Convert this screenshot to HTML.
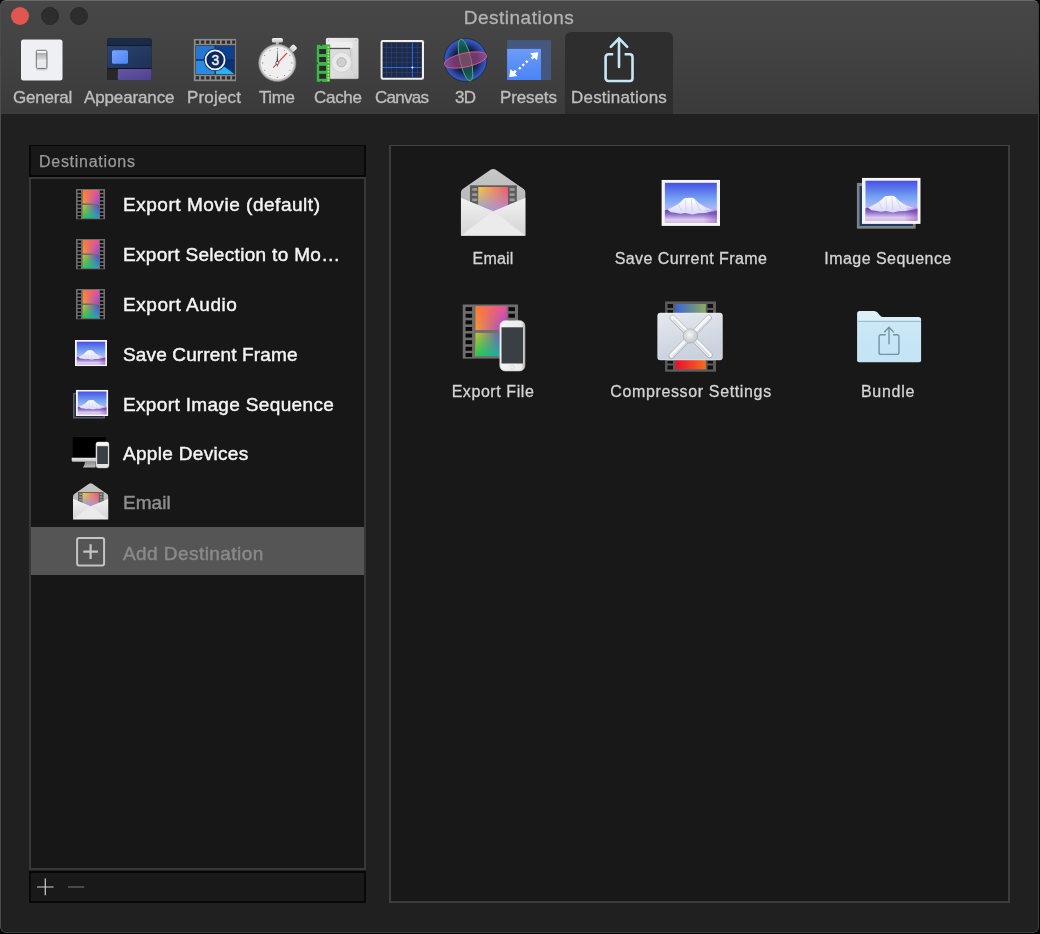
<!DOCTYPE html>
<html><head><meta charset="utf-8">
<style>
*{box-sizing:border-box;margin:0;padding:0}
html,body{width:1040px;height:934px;background:#000;overflow:hidden}
body{font-family:"Liberation Sans",sans-serif;position:relative}
.title,.lbl,.ht,.t,.gl{will-change:transform}
#win{position:absolute;left:0;top:0;width:1039px;height:933px;border-radius:6px;overflow:hidden;background:#202020}
#border{position:absolute;left:0;top:0;width:1039px;height:933px;border-radius:6px;border:1px solid #4c4c4c;border-top-color:#6a6a6a;border-right-color:#3c3c3c;border-bottom-color:#3c3c3c;pointer-events:none}
#tb{position:absolute;left:0;top:0;width:1040px;height:114px;background:linear-gradient(#474747 0%,#424242 50%,#3a3a3a 100%)}
#tbline{position:absolute;left:0;top:113px;width:1040px;height:1px;background:#3d3d3d}
.title{position:absolute;left:0;top:6.5px;width:1040px;text-align:center;color:#b2b2b2;font-size:19px;letter-spacing:0.45px;-webkit-text-stroke:0.3px currentColor}
.light{position:absolute;width:18px;height:18px;border-radius:50%;top:7px}
.lbl{position:absolute;top:87.5px;color:#bdbdbd;font-size:17px;white-space:nowrap;-webkit-text-stroke:0.35px currentColor}
#sel{position:absolute;left:565px;top:32px;width:108px;height:82px;background:#2e2e2e;border-radius:6px 6px 0 0}
svg{position:absolute;overflow:visible}
#hdr{position:absolute;left:29px;top:145px;width:337px;height:32px;background:#181818;border:2px solid #080808;border-top-width:1.5px}
.ht{position:absolute;left:39px;top:153.3px;color:#9a9a9a;font-size:16px;letter-spacing:0.72px;white-space:nowrap;-webkit-text-stroke:0.25px currentColor}
#list{position:absolute;left:29px;top:177px;width:337px;height:693px;background:#171717;border:2px solid #383838}
#selrow{position:absolute;left:31px;top:527px;width:333px;height:48px;background:#555555}
.t{position:absolute;left:123px;color:#f4f4f4;font-size:19px;letter-spacing:0.4px;white-space:nowrap;-webkit-text-stroke:0.45px currentColor}
#foot{position:absolute;left:29px;top:871px;width:337px;height:32px;background:#191919;border:2px solid #080808}
#right{position:absolute;left:389px;top:145px;width:621px;height:758px;background:#181818;border:2px solid #3c3c3c;border-top:1px solid #424242}
.gl{position:absolute;color:#d4d4d4;font-size:16px;letter-spacing:0.55px;white-space:nowrap;text-align:center;width:240px;-webkit-text-stroke:0.3px currentColor}
</style></head>
<body>
<div id="win">
  <svg style="left:0;top:0;width:0;height:0;position:absolute">
    <defs>
      <linearGradient id="ftT1" x1="0" y1="0" x2="1" y2="0"><stop offset="0" stop-color="#ff7a30"/><stop offset="1" stop-color="#e8529e"/></linearGradient>
      <linearGradient id="ftT2" x1="0" y1="0" x2="1" y2="0"><stop offset="0" stop-color="#f39a32"/><stop offset="1" stop-color="#9c40e4"/></linearGradient>
      <linearGradient id="ftB1" x1="0" y1="0" x2="1" y2="0"><stop offset="0" stop-color="#c0c828"/><stop offset="1" stop-color="#5246dc"/></linearGradient>
      <linearGradient id="ftB2" x1="0" y1="0" x2="1" y2="0"><stop offset="0" stop-color="#1ecc4c"/><stop offset="1" stop-color="#20a2c4"/></linearGradient>
      <linearGradient id="vmask" x1="0" y1="0" x2="0" y2="1"><stop offset="0" stop-color="#000"/><stop offset="1" stop-color="#fff"/></linearGradient>
      <mask id="vm" maskContentUnits="objectBoundingBox"><rect x="0" y="0" width="1" height="1" fill="url(#vmask)"/></mask>
      <linearGradient id="sky" x1="0" y1="0" x2="0" y2="1"><stop offset="0" stop-color="#4650e6"/><stop offset="0.4" stop-color="#74a0f2"/><stop offset="0.6" stop-color="#a2b4f6"/><stop offset="0.7" stop-color="#b8b0f0"/></linearGradient>
      <linearGradient id="base" x1="0" y1="0" x2="0" y2="1"><stop offset="0" stop-color="#5c40b4"/><stop offset="0.35" stop-color="#8a6cc8"/><stop offset="0.75" stop-color="#dccbec"/><stop offset="1" stop-color="#d4bce8"/></linearGradient>
      <linearGradient id="baseR" x1="0" y1="0" x2="1" y2="0"><stop offset="0.75" stop-color="#6a2aa0" stop-opacity="0"/><stop offset="1" stop-color="#7a30a8" stop-opacity="0.45"/></linearGradient>
      <linearGradient id="mtn" x1="0" y1="0" x2="0" y2="1"><stop offset="0" stop-color="#ffffff"/><stop offset="1" stop-color="#d8d8f8"/></linearGradient>
      <symbol id="photo" preserveAspectRatio="none" viewBox="0 0 59 46">
        <rect x="0" y="0" width="59" height="46" fill="#f6f6f6"/>
        <rect x="3.5" y="3" width="52.2" height="40" fill="url(#sky)"/>
        <path d="M4.5 30.2 Q16 26.5 22.5 19 Q23.5 18.2 25 18.2 L30.5 18 Q32 18 33.5 19.2 Q40 27.5 55.7 31.2 L55.7 35 L4.5 35Z" fill="url(#mtn)"/>
        <path d="M17 24 L20 31 M24 20 L25 31 M30 19 L31 32 M34 20 L39 31 M41 23 L47 31" stroke="#b8bcf0" stroke-width="0.9" opacity="0.55"/>
        <path d="M3.5 30.4 L6 29.6 L9.5 32.4 L14 32.8 L19 33.8 L24 33.2 L31 34.6 L37 33.4 L44 33.2 L50 32 L55.7 31.2 L55.7 43 L3.5 43Z" fill="url(#base)"/>
        <rect x="3.5" y="30" width="52.2" height="13" fill="url(#baseR)"/>
      </symbol>
      <symbol id="film" preserveAspectRatio="none" viewBox="0 0 29 30.5">
        <rect x="0" y="0" width="29" height="30.5" fill="#6e6e6e"/>
        <g fill="#0a0a0a">
          <rect x="1.6" y="1.6" width="3.4" height="2.2"/><rect x="1.6" y="5.3" width="3.4" height="2.2"/><rect x="1.6" y="9" width="3.4" height="2.2"/><rect x="1.6" y="12.7" width="3.4" height="2.2"/><rect x="1.6" y="16.4" width="3.4" height="2.2"/><rect x="1.6" y="20.1" width="3.4" height="2.2"/><rect x="1.6" y="23.8" width="3.4" height="2.2"/><rect x="1.6" y="27.3" width="3.4" height="2.2"/>
          <rect x="24" y="1.6" width="3.4" height="2.2"/><rect x="24" y="5.3" width="3.4" height="2.2"/><rect x="24" y="9" width="3.4" height="2.2"/><rect x="24" y="12.7" width="3.4" height="2.2"/><rect x="24" y="16.4" width="3.4" height="2.2"/><rect x="24" y="20.1" width="3.4" height="2.2"/><rect x="24" y="23.8" width="3.4" height="2.2"/><rect x="24" y="27.3" width="3.4" height="2.2"/>
        </g>
        <rect x="6.8" y="1" width="16.3" height="13.4" fill="url(#ftT1)"/>
        <rect x="6.8" y="1" width="16.3" height="13.4" fill="url(#ftT2)" mask="url(#vm)"/>
        <rect x="6.8" y="16" width="16.3" height="13" fill="url(#ftB1)"/>
        <rect x="6.8" y="16" width="16.3" height="13" fill="url(#ftB2)" mask="url(#vm)"/>
      </symbol>
      <linearGradient id="envL" x1="0" y1="0" x2="0" y2="1"><stop offset="0" stop-color="#f2f2f2"/><stop offset="1" stop-color="#d4d4d4"/></linearGradient>
      <linearGradient id="envBack" x1="0" y1="0" x2="0" y2="1"><stop offset="0" stop-color="#c8c8c8"/><stop offset="1" stop-color="#a8a8a8"/></linearGradient>
      <linearGradient id="emT1" x1="0" y1="0" x2="1" y2="0"><stop offset="0" stop-color="#f8ca48"/><stop offset="1" stop-color="#ee5868"/></linearGradient>
      <linearGradient id="emT2" x1="0" y1="0" x2="1" y2="0"><stop offset="0" stop-color="#8a9ae6"/><stop offset="0.5" stop-color="#a098dc"/><stop offset="1" stop-color="#b890d0"/></linearGradient>
      <symbol id="envelope" preserveAspectRatio="none" viewBox="0 0 65 67">
        <path d="M0 25 Q0 21.4 3 19.6 L29.5 1.5 Q32.5 -0.5 35.5 1.5 L62 19.6 Q65 21.4 65 25 V67 H0Z" fill="url(#envBack)"/>
        <rect x="9.2" y="16.7" width="47" height="40" fill="#5c5c5c"/>
        <g fill="#9c9c9c">
          <rect x="11.5" y="19.5" width="5" height="2.6"/><rect x="11.5" y="24.7" width="5" height="2.6"/><rect x="11.5" y="29.9" width="5" height="2.6"/><rect x="11.5" y="35.1" width="5" height="2.6"/>
          <rect x="49" y="19.5" width="5" height="2.6"/><rect x="49" y="24.7" width="5" height="2.6"/><rect x="49" y="29.9" width="5" height="2.6"/><rect x="49" y="35.1" width="5" height="2.6"/>
        </g>
        <rect x="17.5" y="18.4" width="29.9" height="26" fill="url(#emT1)"/>
        <rect x="17.5" y="18.4" width="29.9" height="26" fill="url(#emT2)" mask="url(#vm)"/>
        <path d="M0 29 L32.5 42.6 L65 29 V67 H0Z" fill="url(#envL)"/>
        <path d="M0 67 L29.5 44.5 Q32.5 42.3 35.5 44.5 L65 67Z" fill="#ebebeb"/>
      </symbol>
    </defs>
  </svg>

  <div id="tb"></div>
  <div id="tbline"></div>
  <div class="title" style="left:-1px;letter-spacing:0.5px">Destinations</div>
  <div class="light" style="left:11.1px;background:#e0574f"></div>
  <div class="light" style="left:41px;background:#2d2d2d;border:1px solid #292929"></div>
  <div class="light" style="left:70px;background:#2d2d2d;border:1px solid #292929"></div>
  <div id="sel"></div>

  <div class="lbl" style="left:12.5px;letter-spacing:-0.22px">General</div>
  <div class="lbl" style="left:84px;letter-spacing:-0.13px">Appearance</div>
  <div class="lbl" style="left:186.7px;letter-spacing:0.17px">Project</div>
  <div class="lbl" style="left:258.5px;letter-spacing:-0.43px">Time</div>
  <div class="lbl" style="left:314px;letter-spacing:-0.3px">Cache</div>
  <div class="lbl" style="left:375.4px;letter-spacing:-0.73px">Canvas</div>
  <div class="lbl" style="left:454.6px;letter-spacing:-0.8px">3D</div>
  <div class="lbl" style="left:500.3px;letter-spacing:-0.12px">Presets</div>
  <div class="lbl" style="left:570.5px;letter-spacing:0.21px">Destinations</div>

  <!--TOOLBAR_ICONS-->
  <!-- General -->
  <svg style="left:0;top:0" width="1" height="1">
    <defs>
      <linearGradient id="swg" x1="0" y1="0" x2="0" y2="1"><stop offset="0" stop-color="#f4f4f4"/><stop offset="0.12" stop-color="#f4f4f4"/><stop offset="0.14" stop-color="#a9abad"/><stop offset="0.5" stop-color="#d9dadb"/><stop offset="0.52" stop-color="#ececec"/><stop offset="1" stop-color="#e6e6e6"/></linearGradient>
    </defs>
    <rect x="21" y="39.5" width="41.5" height="41" rx="2.5" fill="#eff0f4"/>
    <rect x="36.5" y="51.5" width="11" height="19" rx="1" fill="#000" opacity="0.12"/>
    <rect x="36.3" y="50.3" width="10.6" height="18.2" rx="1.2" fill="url(#swg)" stroke="#6f7174" stroke-width="1"/>
  </svg>
  <!-- Appearance -->
  <svg style="left:0;top:0" width="1" height="1">
    <defs>
      <linearGradient id="apm" x1="0" y1="0" x2="1" y2="1"><stop offset="0" stop-color="#2a4470"/><stop offset="1" stop-color="#1e3056"/></linearGradient>
      <linearGradient id="aps" x1="0" y1="0" x2="1" y2="1"><stop offset="0" stop-color="#7ba6fb"/><stop offset="1" stop-color="#4a84f6"/></linearGradient>
      <linearGradient id="app" x1="0" y1="0" x2="1" y2="1"><stop offset="0" stop-color="#6656a6"/><stop offset="1" stop-color="#4f418f"/></linearGradient>
    </defs>
    <rect x="107.2" y="38.5" width="44.4" height="41.5" rx="1.5" fill="#151515"/>
    <rect x="107.2" y="38.5" width="44.4" height="6.8" rx="1.2" fill="#1a2b4a"/>
    <rect x="107.2" y="46.1" width="44.4" height="22" rx="1" fill="url(#apm)"/>
    <rect x="107.2" y="68.9" width="11" height="11.1" fill="#272727"/>
    <rect x="117.8" y="68.9" width="33.8" height="11.1" rx="1" fill="url(#app)"/>
    <rect x="112" y="50.3" width="16" height="13.5" rx="1.5" fill="url(#aps)"/>
  </svg>
  <!-- Project -->
  <svg style="left:0;top:0" width="1" height="1">
    <defs>
      <clipPath id="pjc"><rect x="195.9" y="45.7" width="38.7" height="28.6"/></clipPath>
    </defs>
    <rect x="193.8" y="38.9" width="42.3" height="42.3" fill="#8c8c8c"/>
    <g fill="#2e2e2e">
      <rect x="195.7" y="40.5" width="3.4" height="3.3"/><rect x="200.9" y="40.5" width="3.4" height="3.3"/><rect x="206.1" y="40.5" width="3.4" height="3.3"/><rect x="211.3" y="40.5" width="3.4" height="3.3"/><rect x="216.5" y="40.5" width="3.4" height="3.3"/><rect x="221.7" y="40.5" width="3.4" height="3.3"/><rect x="226.9" y="40.5" width="3.4" height="3.3"/><rect x="232.1" y="40.5" width="3" height="3.3"/>
      <rect x="195.7" y="76.2" width="3.4" height="3.3"/><rect x="200.9" y="76.2" width="3.4" height="3.3"/><rect x="206.1" y="76.2" width="3.4" height="3.3"/><rect x="211.3" y="76.2" width="3.4" height="3.3"/><rect x="216.5" y="76.2" width="3.4" height="3.3"/><rect x="221.7" y="76.2" width="3.4" height="3.3"/><rect x="226.9" y="76.2" width="3.4" height="3.3"/><rect x="232.1" y="76.2" width="3" height="3.3"/>
    </g>
    <rect x="195.3" y="45.1" width="39.9" height="29.8" fill="#4a3a30"/>
    <g clip-path="url(#pjc)">
      <rect x="195.9" y="45.7" width="19.3" height="14.3" fill="#2376d2"/>
      <rect x="215.2" y="45.7" width="19.4" height="14.3" fill="#0c418f"/>
      <rect x="195.9" y="60" width="19.3" height="14.3" fill="#2a8be2"/>
      <rect x="215.2" y="60" width="19.4" height="14.3" fill="#0a3276"/>
      <path d="M215.2 60 L234.6 74.3 L215.2 74.3Z" fill="#27b3f6"/>
      <path d="M195.9 60H234.6M215.2 45.7V74.3" stroke="#0a2e66" stroke-width="1.3"/>
    </g>
    <circle cx="215.1" cy="59.9" r="11.2" fill="#0a2a5e"/>
    <circle cx="215.1" cy="59.9" r="9.5" fill="none" stroke="#f2f2f2" stroke-width="1.8"/>
    <text x="215.3" y="65.4" text-anchor="middle" font-family="Liberation Sans" font-size="13.8" fill="#f2f2f2" stroke="#f2f2f2" stroke-width="0.45">3</text>
  </svg>
  <!-- Time -->
  <svg style="left:0;top:0" width="1" height="1">
    <defs>
      <radialGradient id="swr" cx="0.5" cy="0.5" r="0.5"><stop offset="0.85" stop-color="#d8d8d8"/><stop offset="1" stop-color="#b0b0b0"/></radialGradient>
      <linearGradient id="swc" x1="0" y1="0" x2="0" y2="1"><stop offset="0" stop-color="#f4f4f4"/><stop offset="1" stop-color="#c4c4c4"/></linearGradient>
    </defs>
    <rect x="275.8" y="41.5" width="3" height="4" fill="#bdbdbd"/>
    <rect x="271.9" y="38" width="11" height="4.4" rx="1.5" fill="url(#swc)"/>
    <rect x="290" y="45" width="6" height="6.5" rx="1.5" transform="rotate(45 293 48.3)" fill="url(#swc)"/>
    <circle cx="277.3" cy="62.9" r="18.6" fill="url(#swr)" stroke="#8e8e8e" stroke-width="0.6"/>
    <circle cx="277.3" cy="62.9" r="17" fill="#efefef" stroke="#b4b4b4" stroke-width="0.7"/>
    <g fill="#6a6a6a">
      <circle cx="277.3" cy="48.3" r="0.55"/><circle cx="277.3" cy="77.5" r="0.55"/><circle cx="262.7" cy="62.9" r="0.55"/><circle cx="291.9" cy="62.9" r="0.55"/>
      <circle cx="284.6" cy="50.3" r="0.5"/><circle cx="289.9" cy="55.6" r="0.5"/><circle cx="289.9" cy="70.2" r="0.5"/><circle cx="284.6" cy="75.5" r="0.5"/>
      <circle cx="270" cy="75.5" r="0.5"/><circle cx="264.7" cy="70.2" r="0.5"/><circle cx="264.7" cy="55.6" r="0.5"/><circle cx="270" cy="50.3" r="0.5"/>
    </g>
    <path d="M273.2 67.6 L287 53" stroke="#e2484a" stroke-width="1.2"/>
    <path d="M277.3 48.3 L278 62.9 L277.3 67.5 L276.6 62.9Z" fill="#2a2a2a"/>
    <circle cx="277.3" cy="62.9" r="1.6" fill="#eee" stroke="#444" stroke-width="0.8"/>
  </svg>
  <!-- Cache -->
  <svg style="left:0;top:0" width="1" height="1">
    <defs>
      <linearGradient id="hdg" x1="0" y1="0" x2="1" y2="1"><stop offset="0" stop-color="#ededed"/><stop offset="1" stop-color="#d2d2d2"/></linearGradient>
    </defs>
    <rect x="325.6" y="37.6" width="33.2" height="41.6" rx="1.8" fill="#8a8a8a" opacity="0.6"/>
    <rect x="326" y="38" width="32.4" height="40.8" rx="1.5" fill="url(#hdg)"/>
    <circle cx="328.5" cy="40.3" r="0.7" fill="#b8b8b8"/><circle cx="356" cy="40.3" r="0.7" fill="#b8b8b8"/><circle cx="356" cy="76.5" r="0.7" fill="#b8b8b8"/>
    <rect x="331" y="42" width="21.5" height="6" fill="#eeeeee"/>
    <path d="M330 48.3 H350.2 V64 A10.6 10.6 0 0 1 339.6 73.6 A10.6 10.6 0 0 1 330 63Z" fill="#dcdcdc"/>
    <rect x="330" y="47.8" width="20.2" height="1.3" fill="#444" opacity="0.9"/>
    <path d="M350.2 49 V65" stroke="#bdbdbd" stroke-width="0.9"/>
    <path d="M352 49 V71" stroke="#c4c4c4" stroke-width="0.7"/>
    <circle cx="341.5" cy="62.3" r="10" fill="#e9e9e9" stroke="#cdcdcd" stroke-width="0.7"/>
    <circle cx="341.5" cy="62.3" r="4.6" fill="#cfcfcf" stroke="#a8a8a8" stroke-width="0.8"/>
    <rect x="316.6" y="44.6" width="13.5" height="37.5" fill="#1f7a2a"/>
    <rect x="316.9" y="44.9" width="12.9" height="36.9" fill="#3fb54c"/>
    <rect x="320.5" y="44.6" width="1.6" height="1.3" fill="#3a3a3a"/><rect x="316.6" y="62.5" width="1.2" height="1.6" fill="#3a3a3a"/><rect x="320.5" y="80.8" width="1.6" height="1.3" fill="#3a3a3a"/>
    <g fill="#2a2a2a">
      <rect x="319.2" y="49" width="6.8" height="5"/><rect x="319.2" y="57" width="6.8" height="5"/><rect x="319.2" y="65.8" width="6.8" height="5"/><rect x="319.2" y="73.8" width="6.8" height="5"/>
    </g>
    <g fill="#d7e65a">
      <rect x="327.5" y="46.5" width="1.8" height="1.6"/><rect x="327.5" y="49.5" width="1.8" height="1.6"/><rect x="327.5" y="52.5" width="1.8" height="1.6"/><rect x="327.5" y="55.5" width="1.8" height="1.6"/><rect x="327.5" y="58.5" width="1.8" height="1.6"/><rect x="327.5" y="61.5" width="1.8" height="1.6"/><rect x="327.5" y="65" width="1.8" height="1.6"/><rect x="327.5" y="68" width="1.8" height="1.6"/><rect x="327.5" y="71" width="1.8" height="1.6"/><rect x="327.5" y="74" width="1.8" height="1.6"/><rect x="327.5" y="77" width="1.8" height="1.6"/><rect x="327.5" y="79.5" width="1.8" height="1.4"/>
    </g>
  </svg>
  <!-- Canvas -->
  <svg style="left:0;top:0" width="1" height="1">
    <rect x="380.6" y="40.1" width="43.4" height="39.6" rx="2.2" fill="#f0f0f0"/>
    <rect x="382.9" y="42.4" width="38.8" height="35" fill="#1f2b46" stroke="#101828" stroke-width="0.5"/>
    <g stroke="#2d5396" stroke-width="0.55" opacity="0.75">
      <path d="M386.5 42.5V77.3M391.5 42.5V77.3M396.5 42.5V77.3M402 42.5V77.3M407 42.5V77.3M417.5 42.5V77.3"/>
      <path d="M383 47.5H421.6M383 52.5H421.6M383 57.5H421.6M383 62.5H421.6M383 72.5H421.6"/>
    </g>
    <path d="M412.4 42.5V77.3M383 67.5H421.6" stroke="#1c72f2" stroke-width="1"/>
    <circle cx="412.4" cy="67.5" r="1" fill="#ffffff"/>
  </svg>
  <!-- 3D -->
  <svg style="left:0;top:0" width="1" height="1">
    <defs>
      <radialGradient id="sph" cx="0.5" cy="0.5" r="0.5"><stop offset="0" stop-color="#0b1430"/><stop offset="0.55" stop-color="#13204f"/><stop offset="0.93" stop-color="#3658c0"/><stop offset="1" stop-color="#2a4396"/></radialGradient>
    </defs>
    <circle cx="465.5" cy="59.9" r="21.6" fill="url(#sph)" stroke="#1c1c24" stroke-width="0.5"/>
    <ellipse cx="465.5" cy="60" rx="5.6" ry="21.4" transform="rotate(-13 465.5 60)" fill="#1d6a48" fill-opacity="0.6" stroke="#3ed06a" stroke-width="0.8"/>
    <ellipse cx="465.5" cy="60" rx="21.6" ry="7" transform="rotate(-12 465.5 60)" fill="#b04a7e" fill-opacity="0.6" stroke="#f05a8a" stroke-width="0.8"/>
  </svg>
  <!-- Presets -->
  <svg style="left:0;top:0" width="1" height="1">
    <defs>
      <linearGradient id="prg" x1="0" y1="0" x2="0" y2="1"><stop offset="0" stop-color="#6b9cf9"/><stop offset="1" stop-color="#4a83f5"/></linearGradient>
    </defs>
    <rect x="507.1" y="40.1" width="43.9" height="39.9" fill="#44587f"/>
    <rect x="507.1" y="48.9" width="33.9" height="31.1" fill="url(#prg)"/>
    <path d="M538.3 52.3 L537 60.3 L534.4 57.7 L532.6 59.5 L530.8 57.7 L532.6 55.9 L530 53.3Z" fill="#fff"/>
    <path d="M509.2 77 L510.5 69 L513.1 71.6 L515 69.8 L516.8 71.6 L515 73.4 L517.6 76Z" fill="#fff"/>
    <path d="M519 69 L529.5 59" stroke="#fff" stroke-width="2.4" stroke-dasharray="2.2 2.6"/>
  </svg>
  <!-- Destinations share -->
  <svg style="left:0;top:0" width="1" height="1">
    <path d="M613.2 54.3 H608.4 A2.8 2.8 0 0 0 605.6 57.1 V78.2 A2.8 2.8 0 0 0 608.4 81 H629.7 A2.8 2.8 0 0 0 632.5 78.2 V57.1 A2.8 2.8 0 0 0 629.7 54.3 H624.6" fill="none" stroke="#c7e7f6" stroke-width="2.6"/>
    <path d="M619 38.5 V67 M610.8 46.8 L619 38.3 L627.2 46.8" fill="none" stroke="#c7e7f6" stroke-width="2.6" stroke-linecap="round"/>
  </svg>

<!--/TOOLBAR_ICONS-->

  <div id="hdr"></div>
  <div class="ht">Destinations</div>
  <div id="list"></div>
  <div id="selrow"></div>
  <div class="t" style="top:194px;letter-spacing:0.53px">Export Movie (default)</div>
  <div class="t" style="top:244px;letter-spacing:0.32px">Export Selection to Mo…</div>
  <div class="t" style="top:293.8px;letter-spacing:0.56px">Export Audio</div>
  <div class="t" style="top:343.8px;letter-spacing:0.14px">Save Current Frame</div>
  <div class="t" style="top:393.8px;letter-spacing:0.35px">Export Image Sequence</div>
  <div class="t" style="top:442.8px;letter-spacing:0.31px">Apple Devices</div>
  <div class="t" style="top:492.4px;letter-spacing:0.03px;color:#8e8e8e">Email</div>
  <div class="t" style="top:542.5px;letter-spacing:0.44px;color:#8a8a8a">Add Destination</div>

  <!--LIST_ICONS-->
  <svg style="left:0;top:0" width="1" height="1">
    <use href="#film" x="76" y="189" width="29" height="30.5"/>
    <use href="#film" x="76" y="239" width="29" height="30.5"/>
    <use href="#film" x="76" y="289" width="29" height="30.5"/>
    <use href="#photo" x="74.9" y="340" width="32.1" height="26.2" preserveAspectRatio="none"/>
    <rect x="73" y="392.9" width="32" height="25.6" fill="#5c5e62"/>
    <rect x="74.5" y="394.5" width="29" height="22.5" fill="#1e2a48"/>
    <use href="#photo" x="75.9" y="389.8" width="32.4" height="26.2" preserveAspectRatio="none"/>
    <!-- apple devices -->
    <defs>
      <linearGradient id="chin" x1="0" y1="0" x2="0" y2="1"><stop offset="0" stop-color="#ececec"/><stop offset="1" stop-color="#bdbdbd"/></linearGradient>
      <linearGradient id="stand" x1="0" y1="0" x2="0" y2="1"><stop offset="0" stop-color="#8e8e8e"/><stop offset="1" stop-color="#bdbdbd"/></linearGradient>
    </defs>
    <path d="M72.7 457.9 V438 Q72.7 436.9 73.8 436.9 H104.9 Q106 436.9 106 438 V457.9Z" fill="#000"/>
    <path d="M85 461.8 H95.5 V467.5 H82.8 Q85 465 85 461.8Z" fill="url(#stand)"/>
    <path d="M71.7 457.8 H97 V461.8 H73.2 Q71.7 461.8 71.7 460.3Z" fill="url(#chin)"/>
    <rect x="95.9" y="441.9" width="13.1" height="26.1" rx="2.4" fill="#e4e4e4" stroke="#b8b8b8" stroke-width="0.4"/>
    <rect x="96.2" y="442.2" width="12.5" height="3" rx="1.8" fill="#f8f8f8"/>
    <rect x="97.2" y="446.2" width="10.7" height="17.8" fill="#3a3f45"/>
    <!-- email -->
    <use href="#envelope" x="73" y="483" width="35.4" height="36.5" preserveAspectRatio="none"/>
    <!-- add -->
    <rect x="77.1" y="538" width="27" height="27.5" rx="2" fill="none" stroke="#c4c4c4" stroke-width="2"/>
    <path d="M83.3 551.6 H97.9 M90.6 544.3 V558.9" stroke="#c4c4c4" stroke-width="2.2"/>
  </svg>

<!--/LIST_ICONS-->

  <div id="foot"></div>
  <svg style="left:0;top:0" width="1" height="1">
    <path d="M37 887H53.6M45.3 878.6V895.2" stroke="#d0d0d0" stroke-width="1.2"/>
    <path d="M68 887H84.2" stroke="#5a5a5a" stroke-width="1.5"/>
  </svg>

  <div id="right"></div>
  <div class="gl" style="left:373px;top:250px;letter-spacing:0.18px">Email</div>
  <div class="gl" style="left:570.5px;top:250px;letter-spacing:0.43px">Save Current Frame</div>
  <div class="gl" style="left:768px;top:250px;letter-spacing:0.46px">Image Sequence</div>
  <div class="gl" style="left:373px;top:382.5px;letter-spacing:0.57px">Export File</div>
  <div class="gl" style="left:570.5px;top:382.5px;letter-spacing:0.64px">Compressor Settings</div>
  <div class="gl" style="left:768px;top:382.5px;letter-spacing:0.73px">Bundle</div>

  <!--GRID_ICONS-->
  <svg style="left:0;top:0" width="1" height="1">
    <defs>
      <linearGradient id="cmpBox" x1="0" y1="0" x2="0.3" y2="1"><stop offset="0" stop-color="#e6e9ef"/><stop offset="1" stop-color="#c9d1dd"/></linearGradient>
      <linearGradient id="cmpTop" x1="0" y1="0" x2="1" y2="0"><stop offset="0" stop-color="#3a64d4"/><stop offset="1" stop-color="#8cab5c"/></linearGradient>
      <linearGradient id="cmpBot" x1="0" y1="0" x2="1" y2="0"><stop offset="0" stop-color="#e8102c"/><stop offset="1" stop-color="#f26e22"/></linearGradient>
      <linearGradient id="rod" x1="0" y1="0" x2="0" y2="1"><stop offset="0" stop-color="#ffffff"/><stop offset="1" stop-color="#c8ccd2"/></linearGradient>
      <radialGradient id="hub" cx="0.45" cy="0.4" r="0.6"><stop offset="0" stop-color="#f6f6f6"/><stop offset="1" stop-color="#bfc3c8"/></radialGradient>
      <linearGradient id="phB" x1="0" y1="0" x2="1" y2="0"><stop offset="0" stop-color="#f4f4f4"/><stop offset="0.85" stop-color="#ececec"/><stop offset="1" stop-color="#b8b8b8"/></linearGradient>
      <linearGradient id="fold" x1="0" y1="0" x2="0" y2="1"><stop offset="0" stop-color="#cbe8f6"/><stop offset="1" stop-color="#c3e4f3"/></linearGradient>
    </defs>
    <!-- Email -->
    <use href="#envelope" x="460.8" y="168.6" width="64.8" height="67.1" preserveAspectRatio="none"/>
    <!-- Save current frame -->
    <use href="#photo" x="661.4" y="179.8" width="58.7" height="46.1" preserveAspectRatio="none"/>
    <!-- Image sequence -->
    <rect x="856.9" y="182.9" width="58.7" height="45.8" fill="#7e8286"/>
    <rect x="859.5" y="186" width="53.5" height="40" fill="#1f3a66"/>
    <use href="#photo" x="862" y="177.7" width="58.7" height="46.2" preserveAspectRatio="none"/>
    <!-- Export file -->
    <use href="#film" x="462.5" y="304.3" width="55.5" height="54.5" preserveAspectRatio="none"/>
    <rect x="499.8" y="320.4" width="25.1" height="50.6" rx="5.5" fill="url(#phB)" stroke="#c4c4c4" stroke-width="0.6"/>
    <rect x="501.5" y="327.3" width="21.5" height="36.2" fill="#3a3f44"/>
    <circle cx="512.3" cy="367.4" r="1.9" fill="#f0f0f0" stroke="#c8c8c8" stroke-width="0.5"/>
    <!-- Compressor -->
    <rect x="665.1" y="301.4" width="50.9" height="70.3" fill="#5c5c5c"/>
    <g fill="#111">
      <rect x="667.5" y="304" width="5.5" height="4"/><rect x="707.5" y="304" width="5.5" height="4"/>
      <rect x="667.5" y="310" width="5.5" height="3"/><rect x="707.5" y="310" width="5.5" height="3"/>
      <rect x="667.5" y="361" width="5.5" height="2.5"/><rect x="707.5" y="361" width="5.5" height="2.5"/>
      <rect x="667.5" y="365.5" width="5.5" height="4"/><rect x="707.5" y="365.5" width="5.5" height="4"/>
    </g>
    <rect x="675.5" y="304" width="30.3" height="10" fill="url(#cmpTop)"/>
    <rect x="675.5" y="359.5" width="30.3" height="9.8" fill="url(#cmpBot)"/>
    <rect x="657.7" y="313.1" width="64.7" height="46.8" rx="2.5" fill="url(#cmpBox)" stroke="#f4f6fa" stroke-width="0.5"/>
    <g stroke="#a4aab2" stroke-width="6.2" stroke-linecap="round" opacity="0.75">
      <path d="M672.6 317.9 L709.6 355.1 M708.8 317.9 L671.6 355.9"/>
    </g>
    <g stroke="#f6f7f9" stroke-width="4.6" stroke-linecap="round">
      <path d="M672.6 317.6 L709.6 354.8 M708.8 317.6 L671.6 355.6"/>
    </g>
    <g stroke="#d4d8de" stroke-width="1.4" stroke-linecap="round">
      <path d="M673.6 320 L709 355.6 M710 319 L673 356.3"/>
    </g>
    <circle cx="690.4" cy="336" r="7.2" fill="url(#hub)" stroke="#aab0b8" stroke-width="0.7"/>
    <!-- Bundle folder -->
    <path d="M857.1 313.5 Q857.1 310.9 859.7 310.9 H874 Q876 310.9 877.5 312.5 L880 315.5 Q881.3 317 883.5 317 H918.5 Q921.1 317 921.1 319.6 V322 H857.1Z" fill="#dcf0f9"/>
    <rect x="857.1" y="320.5" width="64" height="41.7" rx="2" fill="url(#fold)"/>
    <path d="M857.5 321.4 H920.7" stroke="#8fb6c8" stroke-width="0.9"/>
    <path d="M885.7 334.7 H881 A1.9 1.9 0 0 0 879.1 336.6 V352.4 A1.9 1.9 0 0 0 881 354.3 H897 A1.9 1.9 0 0 0 898.9 352.4 V336.6 A1.9 1.9 0 0 0 897 334.7 H893" fill="none" stroke="#7192a6" stroke-width="1.35"/>
    <path d="M889 327.3 V344.3 M884.3 332.3 L889 327.3 L893.7 332.3" fill="none" stroke="#7192a6" stroke-width="1.35"/>
  </svg>

<!--/GRID_ICONS-->

  <div id="border"></div>
</div>
</body></html>
